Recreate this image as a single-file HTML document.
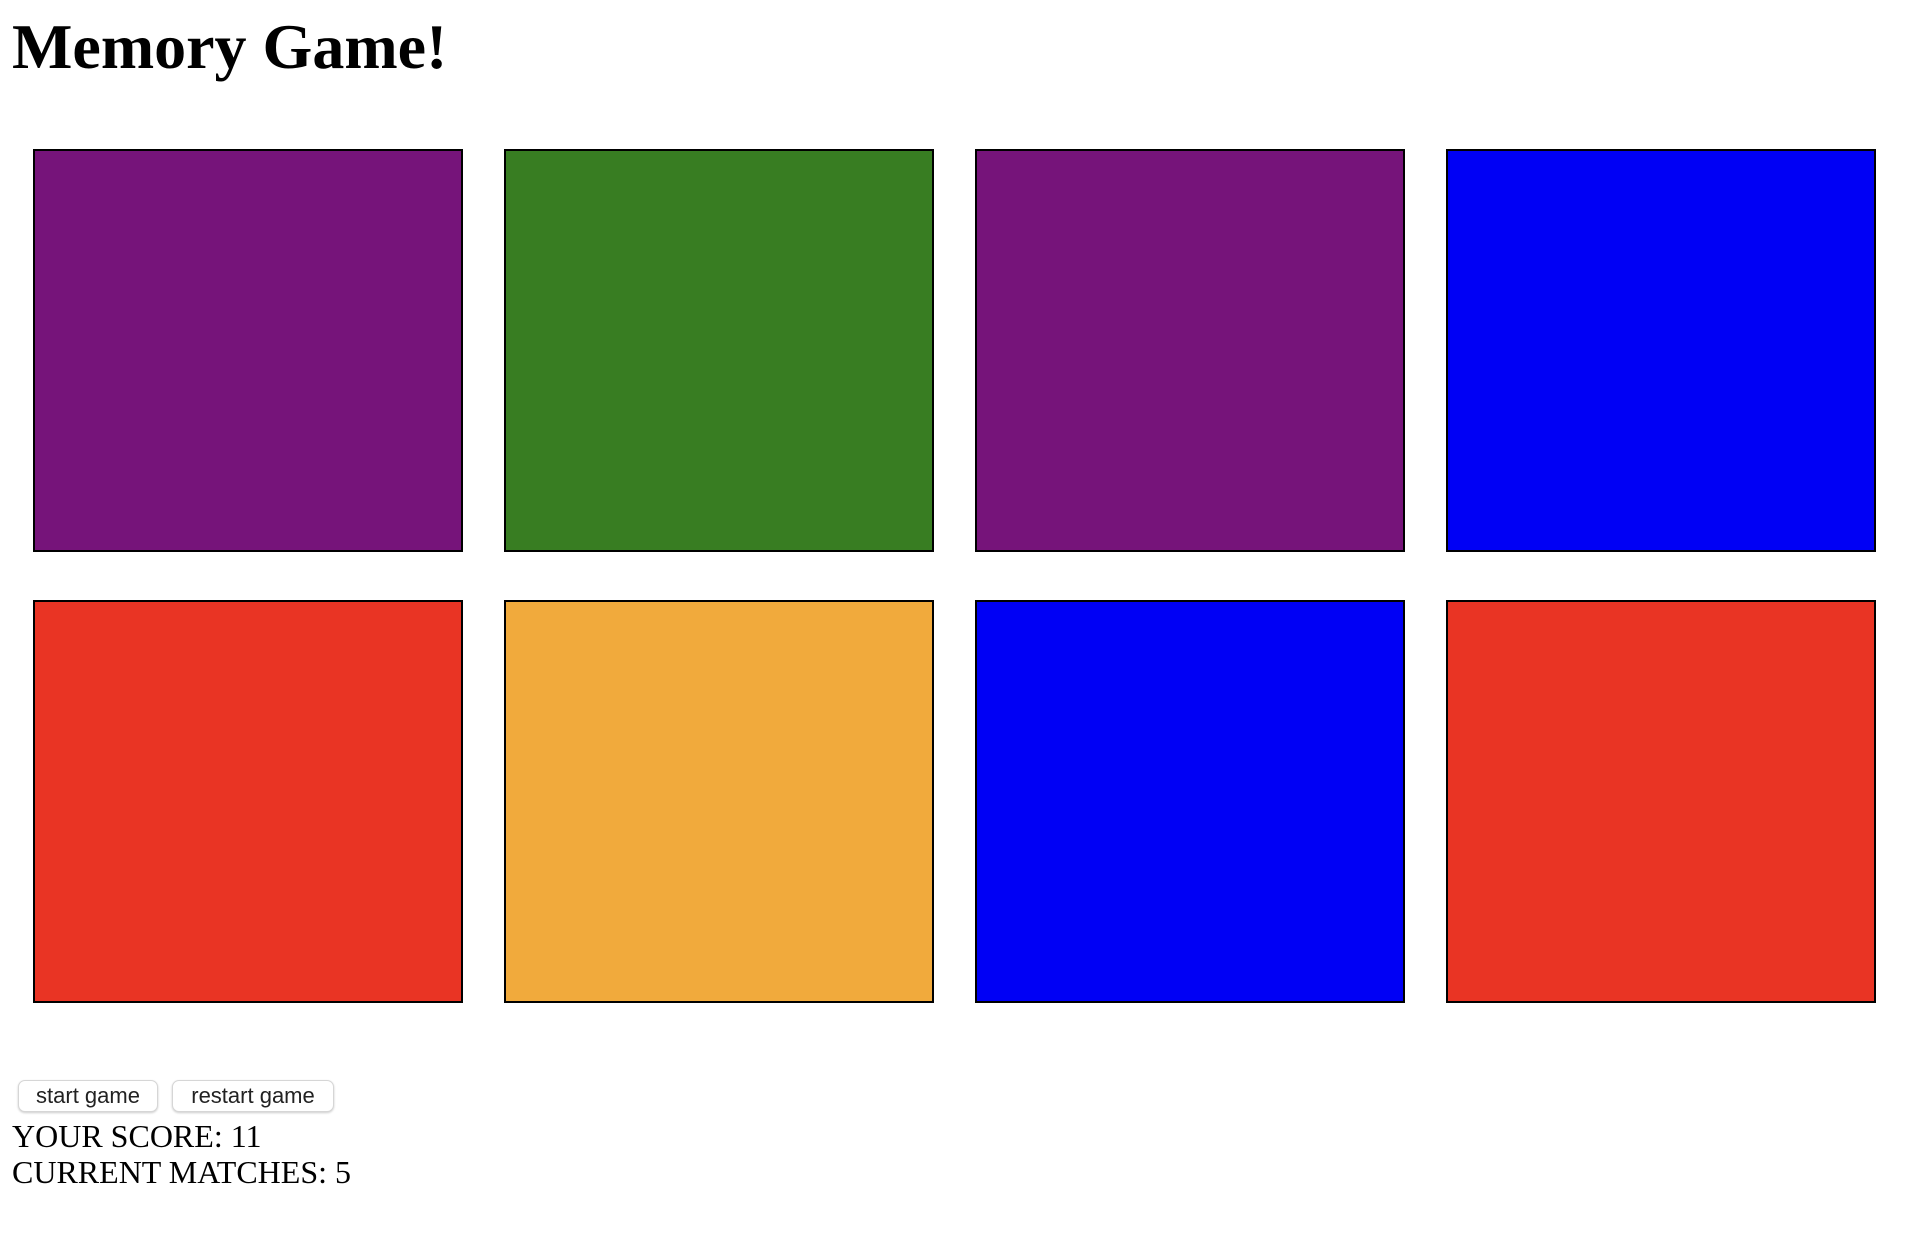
<!DOCTYPE html>
<html><head><meta charset="utf-8"><style>
html,body{margin:0;padding:0;background:#fff;width:1910px;height:1248px;overflow:hidden;position:relative}
h1{position:absolute;left:12px;margin:0;font:bold 64px/1 "Liberation Serif",serif;top:15px;}
.c{position:absolute;width:426px;height:399px;border:2px solid #000}
.p{background:#76147a}.g{background:#387d22}.b{background:#0000f5}.r{background:#e93424}.o{background:#f1aa3c}
.btn{position:absolute;top:1080px;height:30px;border:1px solid #d6d6d6;border-radius:7px;box-shadow:0 1px 2px rgba(0,0,0,.2);font:22px/30px "Liberation Sans",sans-serif;color:#222;text-align:center;background:#fff}
.t{position:absolute;left:12px;font:32px/36px "Liberation Serif",serif;color:#000;white-space:nowrap}
</style></head><body>
<h1>Memory Game!</h1>
<div class="c p" style="left:33px;top:149px"></div>
<div class="c g" style="left:504px;top:149px"></div>
<div class="c p" style="left:975px;top:149px"></div>
<div class="c b" style="left:1446px;top:149px"></div>
<div class="c r" style="left:33px;top:600px"></div>
<div class="c o" style="left:504px;top:600px"></div>
<div class="c b" style="left:975px;top:600px"></div>
<div class="c r" style="left:1446px;top:600px"></div>
<div class="btn" style="left:18px;width:138px">start game</div>
<div class="btn" style="left:172px;width:160px">restart game</div>
<div class="t" style="top:1118px">YOUR SCORE: 11</div>
<div class="t" style="top:1154px">CURRENT MATCHES: 5</div>
</body></html>
